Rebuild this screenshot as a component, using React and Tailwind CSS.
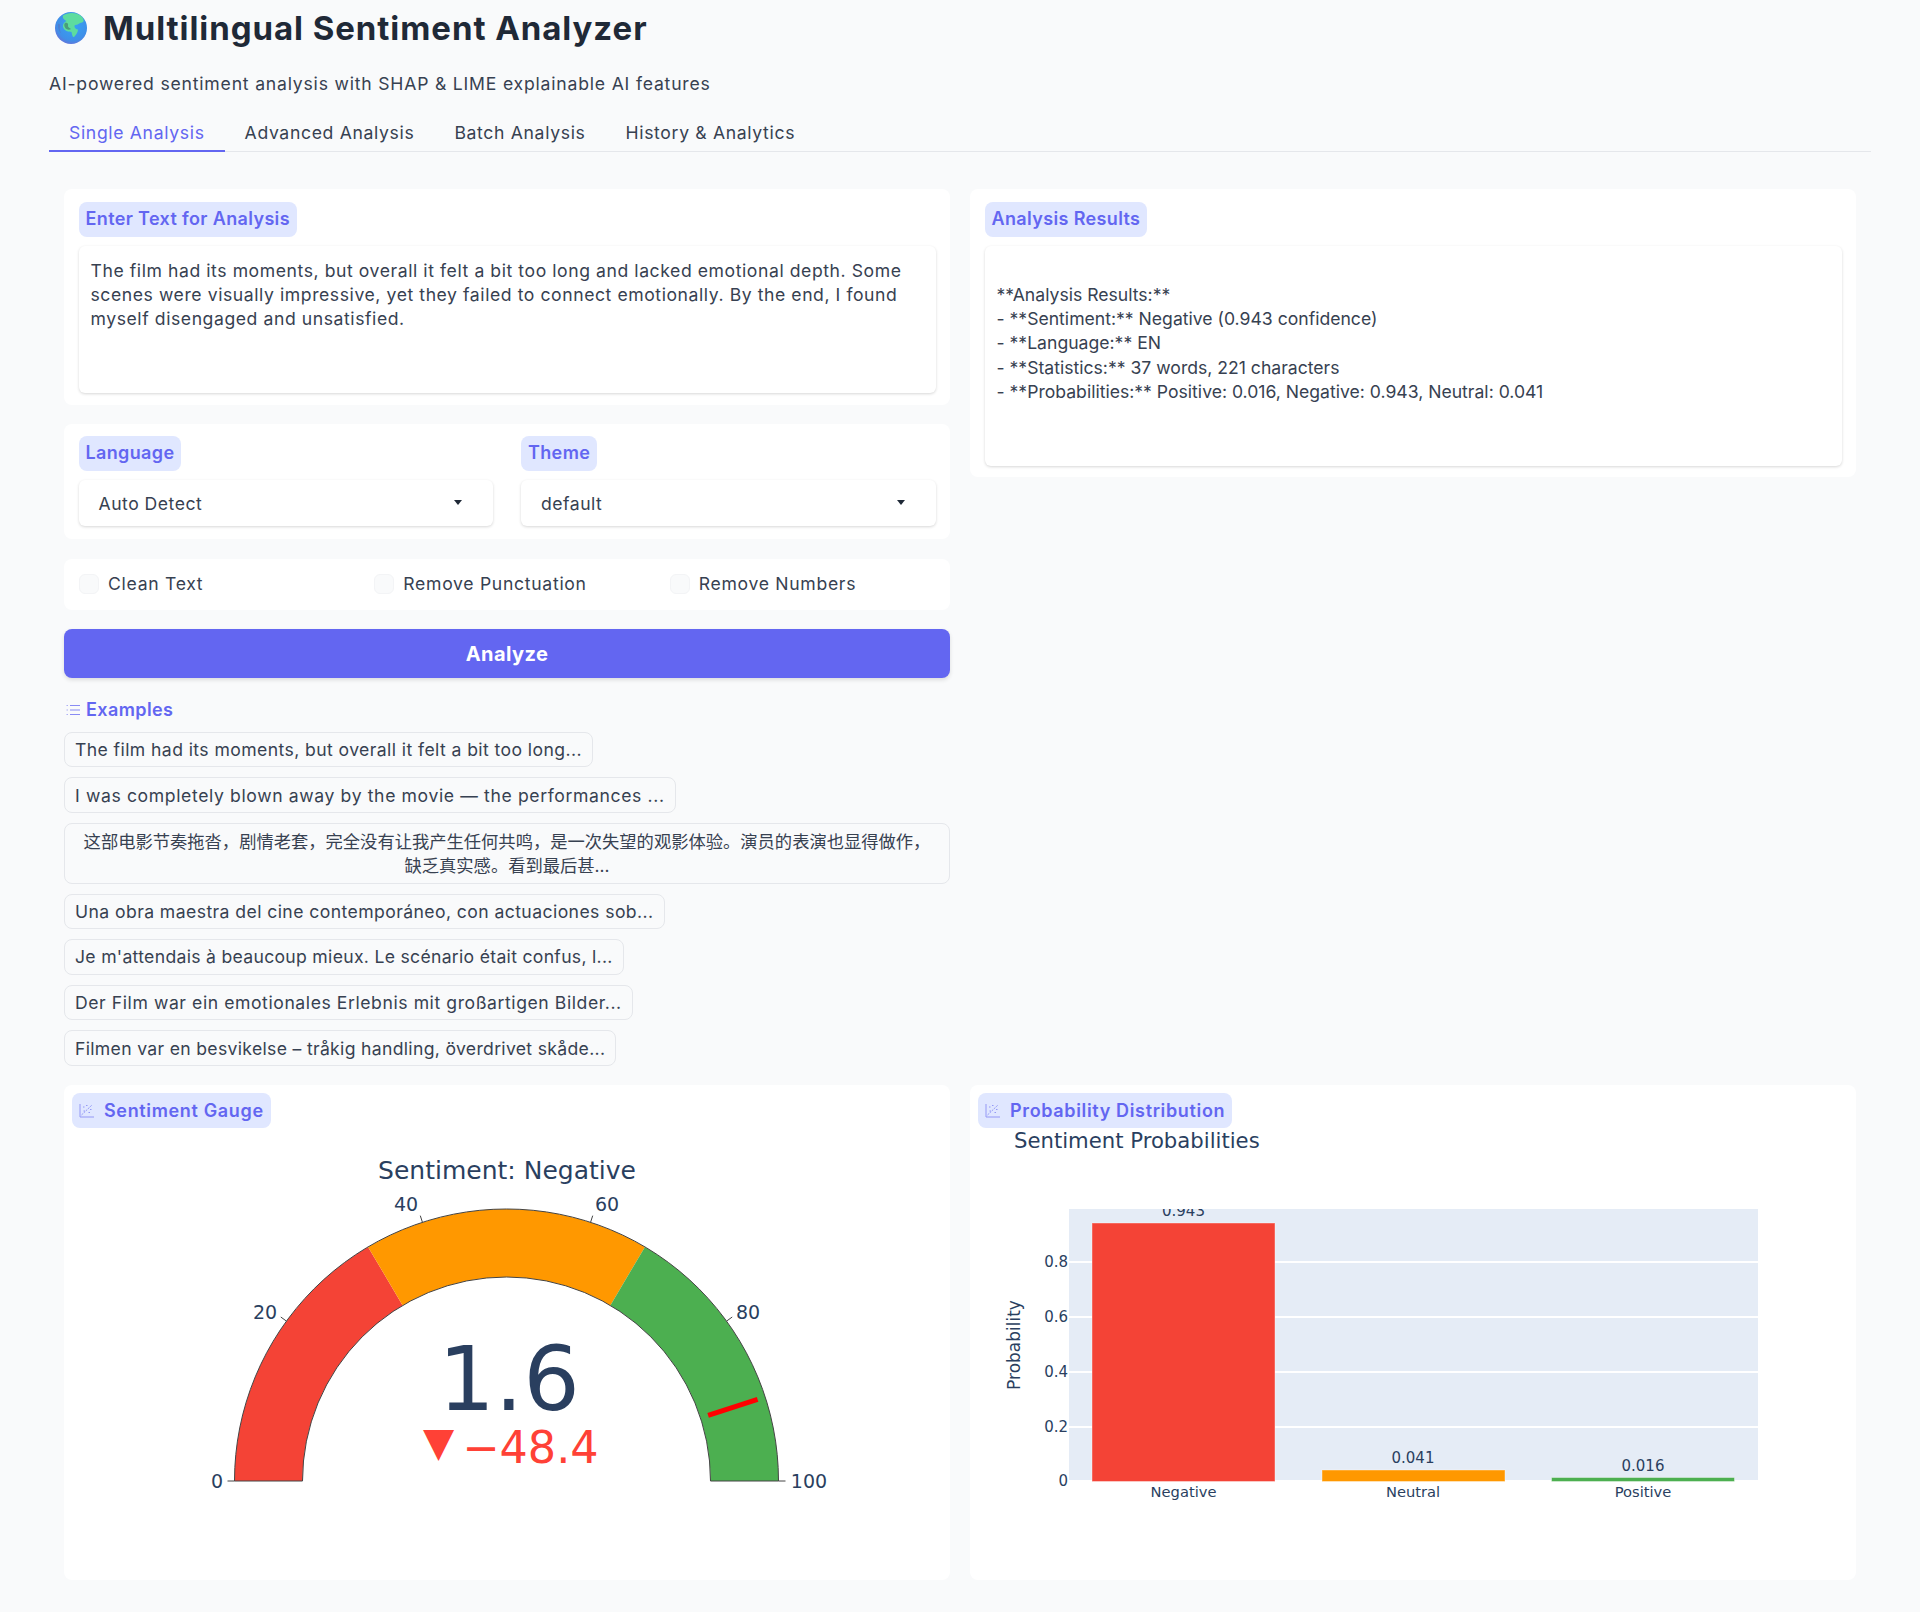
import React from 'react';

const tabs = ['Single Analysis', 'Advanced Analysis', 'Batch Analysis', 'History & Analytics'];

const examples = [
  { text: 'The film had its moments, but overall it felt a bit too long...', fit: 'tracking-[0.41px]' },
  { text: 'I was completely blown away by the movie — the performances ...', fit: 'tracking-[0.62px]' },
  { text: '这部电影节奏拖沓，剧情老套，完全没有让我产生任何共鸣，是一次失望的观影体验。演员的表演也显得做作，缺乏真实感。看到最后甚...', wide: true },
  { text: 'Una obra maestra del cine contemporáneo, con actuaciones sob...', fit: 'tracking-[0.42px]' },
  { text: "Je m'attendais à beaucoup mieux. Le scénario était confus, l...", fit: 'tracking-[0.3px]' },
  { text: 'Der Film war ein emotionales Erlebnis mit großartigen Bilder...', fit: 'tracking-[0.57px]' },
  { text: 'Filmen var en besvikelse – tråkig handling, överdrivet skåde...', fit: 'tracking-[0.32px]' },
];

const resultLines = [
  '**Analysis Results:**',
  '- **Sentiment:** Negative (0.943 confidence)',
  '- **Language:** EN',
  '- **Statistics:** 37 words, 221 characters',
  '- **Probabilities:** Positive: 0.016, Negative: 0.943, Neutral: 0.041',
];

const Globe = () => (
  <svg width="32" height="32" viewBox="0 0 32 32" className="shrink-0">
    <defs>
      <radialGradient id="ocean" cx="55%" cy="40%" r="65%">
        <stop offset="0%" stopColor="#35a4f5" />
        <stop offset="75%" stopColor="#3f8fe8" />
        <stop offset="100%" stopColor="#6a6fd8" />
      </radialGradient>
    </defs>
    <circle cx="16" cy="16" r="16" fill="url(#ocean)" />
    <path d="M8 3.5C12 .6 20 -.4 25.5 3.6 29 6 29.5 10 27 10.5 24 11 23 13 20 13 18.5 15 20.5 17 23 17.5 23 20 21 23 19 25 17.5 25.5 17 22 16.5 20 14 19.5 10 19.5 8.5 16 7 13.5 8.5 10.5 11.5 9 9.5 8 7 6 8 3.5Z" fill="#5ddc9f" />
    <path d="M10 11C12 10 13.5 11.5 13 13.5 12.5 15 14.5 16 16 17 14 18.5 11 17.5 10 15.5 9 14 9 12 10 11Z" fill="#4a9d7c" />
    <path d="M3 12C4.5 11 5.5 13 5 15 4.5 17 5 19 6 21 4 20 2.5 15 3 12Z" fill="#4e7fd0" />
  </svg>
);

const ListIcon = () => (
  <svg width="14" height="12" viewBox="0 0 14 12" fill="none" stroke="#6366f1" className="shrink-0">
    <path d="M4 1.5H14M4 6H14M4 10.5H14" strokeWidth="1.2" strokeOpacity="0.75" />
    <path d="M0.5 1.5H2M0.5 6H2M0.5 10.5H2" strokeWidth="1.2" strokeOpacity="0.5" />
  </svg>
);

const PlotIcon = () => (
  <svg width="15" height="15" viewBox="0 0 15 15" fill="none" stroke="#6366f1" strokeWidth="1" className="shrink-0 opacity-60">
    <path d="M1 1V14H15" />
    <path d="M2.5 12L13 2" strokeDasharray="2 1" />
    <path d="M4 4H5.5M7 2.5H8.5M4.5 8H6M9.5 9.5H11M11 6.5H12.5" />
  </svg>
);

const Pill = ({ children, icon }) => (
  <div className={`flex h-[34.5px] w-fit items-center gap-[10px] rounded-lg bg-[#e0e7ff] px-[7px] text-[18px] font-semibold text-[#6366f1] ${icon ? 'tracking-[0.65px]' : 'tracking-[0.36px]'}`}>
    {icon}
    <span>{children}</span>
  </div>
);

const Panel = ({ className, children }) => (
  <div className={`rounded-lg bg-white ${className}`}>{children}</div>
);

const CheckItem = ({ label }) => (
  <label className="flex items-center gap-[9px]">
    <span className="h-5 w-5 rounded-md border border-[#f3f4f6] bg-[#f9fafb]" />
    <span className="tracking-[0.7px]">{label}</span>
  </label>
);

const Select = ({ label, value }) => (
  <div>
    <Pill>{label}</Pill>
    <div className="mt-[9px] flex h-[46px] items-center justify-between rounded-md bg-white pl-5 pr-[31px] shadow-[0_1px_3px_rgba(0,0,0,0.16)]">
      <span className="pt-[2px] tracking-[0.5px]">{value}</span>
      <svg width="8" height="5" viewBox="0 0 8 5"><path d="M0 0H8L4 5Z" fill="#1f2937" /></svg>
    </div>
  </div>
);

// gauge geometry, in page pixels
const CX = 506.5;
const CY = 1481;
const R = 272;
const r = 204;

const polar = (val, rad) => {
  const a = Math.PI * (1 - val / 100);
  return [CX + rad * Math.cos(a), CY - rad * Math.sin(a)];
};

const band = (from, to) => {
  const [a, b] = polar(from, R);
  const [c, d] = polar(to, R);
  const [e, f] = polar(to, r);
  const [g, h] = polar(from, r);
  return `M${a} ${b}A${R} ${R} 0 0 1 ${c} ${d}L${e} ${f}A${r} ${r} 0 0 0 ${g} ${h}Z`;
};

const Gauge = () => {
  const [t1x, t1y] = polar(90, 212);
  const [t2x, t2y] = polar(90, 264);
  return (
    <svg viewBox="64 1128 886 452" className="block h-[452px] w-full font-['DejaVu_Sans',sans-serif]">
      <text x="507" y="1179" textAnchor="middle" fontSize="25" fill="#2a3f5f">Sentiment: Negative</text>
      <path d={band(0, 33)} fill="#f44336" />
      <path d={band(33, 67)} fill="#ff9800" />
      <path d={band(67, 100)} fill="#4caf50" />
      <path d={band(0, 100)} fill="none" stroke="#444" strokeWidth="1" />
      {[0, 20, 40, 60, 80, 100].map((v) => {
        const [x1, y1] = polar(v, R);
        const [x2, y2] = polar(v, R + 7);
        return <line key={v} x1={x1} y1={y1} x2={x2} y2={y2} stroke="#444" strokeWidth="1" />;
      })}
      <g fontSize="19" fill="#2a3f5f" textAnchor="middle">
        <text x="217" y="1488">0</text>
        <text x="265" y="1319">20</text>
        <text x="406" y="1211">40</text>
        <text x="607" y="1211">60</text>
        <text x="748" y="1319">80</text>
        <text x="809" y="1488">100</text>
      </g>
      <line x1={t1x} y1={t1y} x2={t2x} y2={t2y} stroke="#ff0000" strokeWidth="5" />
      <text x="509" y="1410" textAnchor="middle" fontSize="89" fill="#2a3f5f">1.6</text>
      <text x="423" y="1463" fontSize="44.5" fill="#ff4136">
        <tspan fontSize="40.6" dy="-7">▼</tspan>
        <tspan dx="8" dy="7">−48.4</tspan>
      </text>
    </svg>
  );
};

const bars = [
  { name: 'Negative', x: 1092, top: 1223, fill: '#f44336', val: '0.943', tx: 1183.5 },
  { name: 'Neutral', x: 1322, top: 1470, fill: '#ff9800', val: '0.041', tx: 1413 },
  { name: 'Positive', x: 1551.5, top: 1477.5, fill: '#4caf50', val: '0.016', tx: 1643 },
];

const BarChart = () => (
  <svg viewBox="970 1128 886 452" className="block h-[452px] w-full overflow-visible font-['DejaVu_Sans',sans-serif]">
    <defs>
      <clipPath id="plotclip"><rect x="1069" y="1209" width="689" height="275" /></clipPath>
    </defs>
    <text x="1014" y="1148" fontSize="21.2" fill="#2a3f5f">Sentiment Probabilities</text>
    <rect x="1069" y="1209" width="689" height="271" fill="#e5ecf6" />
    {[1262, 1317, 1372, 1427].map((y) => (
      <line key={y} x1="1069" y1={y} x2="1758" y2={y} stroke="#fff" strokeWidth="2" />
    ))}
    <g clipPath="url(#plotclip)">
      {bars.map((b) => (
        <g key={b.name}>
          <rect x={b.x} y={b.top} width="183" height={1481.5 - b.top} fill={b.fill} stroke="#fff" strokeOpacity="0.4" strokeWidth="1" />
          <text x={b.tx} y={b.top - 7} textAnchor="middle" fontSize="15" fill="#2a3f5f">{b.val}</text>
        </g>
      ))}
    </g>
    <g fontSize="15" fill="#2a3f5f" textAnchor="end">
      <text x="1068" y="1267">0.8</text>
      <text x="1068" y="1322">0.6</text>
      <text x="1068" y="1377">0.4</text>
      <text x="1068" y="1432">0.2</text>
      <text x="1068" y="1486">0</text>
    </g>
    <g fontSize="14.7" fill="#2a3f5f" textAnchor="middle">
      {bars.map((b) => (
        <text key={b.name} x={b.tx} y="1497">{b.name}</text>
      ))}
    </g>
    <text x="1020" y="1345" transform="rotate(-90 1020 1345)" textAnchor="middle" fontSize="17" fill="#2a3f5f">Probability</text>
  </svg>
);

export default function App() {
  return (
    <div className="min-h-[1612px] bg-[#f9fafb] px-[49px] text-[17.6px] leading-[24.3px] text-[#374151] font-['Inter','Noto_Sans_CJK_SC',sans-serif]">
      <div className="ml-[6px] flex h-[56px] items-center gap-4">
        <Globe />
        <h1 className="text-[33px] font-bold tracking-[0.94px] text-[#1f2937]">Multilingual Sentiment Analyzer</h1>
      </div>
      <p className="mt-[16px] tracking-[0.8px]">AI-powered sentiment analysis with SHAP &amp; LIME explainable AI features</p>

      <div className="mt-[17px] flex h-[39px] border-b border-[#e5e7eb]">
        {tabs.map((t, i) => (
          <div
            key={t}
            className={i === 0 ? 'h-[39px] border-b-2 border-[#6366f1] px-5 pt-[8px] tracking-[0.66px] text-[#6366f1]' : 'h-[39px] px-5 pt-[8px] tracking-[0.66px]'}
          >
            {t}
          </div>
        ))}
      </div>

      <div className="px-[15px] pt-[37px]">
        <div className="grid grid-cols-2 items-start gap-5">
          <div className="flex flex-col gap-[19.5px]">
            <Panel className="h-[215.5px] px-[14.5px] pt-[13px]">
              <Pill>Enter Text for Analysis</Pill>
              <textarea
                readOnly
                className="mt-[9px] block h-[147px] w-full resize-none rounded-md bg-white px-3 py-[13px] tracking-[0.57px] shadow-[0_1px_3px_rgba(0,0,0,0.16)] outline-none"
                value="The film had its moments, but overall it felt a bit too long and lacked emotional depth. Some scenes were visually impressive, yet they failed to connect emotionally. By the end, I found myself disengaged and unsatisfied."
              />
            </Panel>
            <Panel className="grid h-[115px] grid-cols-2 gap-[28px] px-[14.5px] pt-[12px]">
              <Select label="Language" value="Auto Detect" />
              <Select label="Theme" value="default" />
            </Panel>
            <Panel className="grid h-[51px] grid-cols-3 items-center gap-[30px] px-[15px]">
              <CheckItem label="Clean Text" />
              <CheckItem label="Remove Punctuation" />
              <CheckItem label="Remove Numbers" />
            </Panel>
            <button className="h-[49px] rounded-lg bg-[#6366f1] text-[20px] font-bold tracking-[0.4px] text-white shadow-[0_2px_4px_rgba(0,0,0,0.12)]">
              Analyze
            </button>
            <div>
              <div className="flex h-6 items-center gap-[6px] pl-[2px] text-[18px] font-semibold tracking-[0.4px] text-[#6366f1]">
                <ListIcon />
                <span>Examples</span>
              </div>
              <div className="mt-[10px] flex flex-col items-start gap-[10px]">
                {examples.map((ex) => (
                  <button
                    key={ex.text}
                    className={
                      ex.wide
                        ? 'w-full rounded-lg border border-[#e5e7eb] bg-[#f9fafb] px-[10px] pb-[4px] pt-[6px] text-center text-[17.3px]'
                        : `h-[35.6px] w-fit rounded-lg border border-[#e5e7eb] bg-[#f9fafb] px-[10px] pt-px ${ex.fit}`
                    }
                  >
                    {ex.text}
                  </button>
                ))}
              </div>
            </div>
          </div>

          <Panel className="h-[288px] px-[14.5px] pt-[13px]">
            <Pill>Analysis Results</Pill>
            <div className="mt-[9px] h-[220px] rounded-md bg-white px-3 pt-[37px] shadow-[0_1px_3px_rgba(0,0,0,0.16)]">
              {resultLines.map((l) => (
                <div key={l}>{l}</div>
              ))}
            </div>
          </Panel>
        </div>

        <div className="mt-[19.5px] grid grid-cols-2 gap-5">
          <Panel className="h-[495px] pt-2">
            <div className="pl-2">
              <Pill icon={<PlotIcon />}>Sentiment Gauge</Pill>
            </div>
            <Gauge />
          </Panel>
          <Panel className="h-[495px] pt-2">
            <div className="pl-2">
              <Pill icon={<PlotIcon />}>Probability Distribution</Pill>
            </div>
            <BarChart />
          </Panel>
        </div>
      </div>
    </div>
  );
}
